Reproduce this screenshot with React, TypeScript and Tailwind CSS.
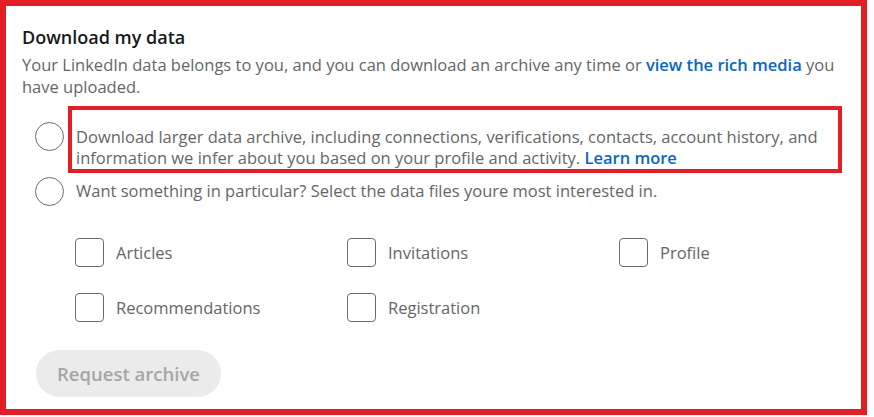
import React from "react";

const files = ["Articles", "Invitations", "Profile", "Recommendations", "Registration"];

function Radio({ className = "" }: { className?: string }) {
  return <span className={`block h-[29px] w-[29px] shrink-0 rounded-full border-[1.5px] border-[#6b6b6b] bg-white ${className}`} />;
}

function Check({ label }: { label: string }) {
  return (
    <label className="flex h-[29px] items-center gap-3">
      <span className="block h-[29px] w-[29px] shrink-0 rounded-[4px] border-[1.5px] border-[#6b6b6b] bg-white" />
      <span>{label}</span>
    </label>
  );
}

export default function App() {
  return (
    <div className="bg-white" style={{ fontFamily: "'Open Sans', 'Noto Sans', sans-serif" }}>
      <section className="h-[415px] w-[867px] border-[6px] border-[#e41e25] px-4 pt-[19px] text-[16.5px] leading-[21.5px] text-[#666666]">
        <h2 className="text-[18px] font-semibold leading-[24px] text-[#191919]">Download my data</h2>
        <p className="mt-[5px]">
          Your LinkedIn data belongs to you, and you can download an archive any time or{" "}
          <a className="font-semibold text-[#0a66c2]">view the rich media</a> you have uploaded.
        </p>

        <div className="ml-[13px] mt-[9px] flex items-start">
          <Radio className="mt-[16px]" />
          <div className="ml-[4px] w-[774px] border-4 border-[#e41e25] pl-[4px] pt-[15.5px]">
            Download larger data archive, including connections, verifications, contacts, account history, and
            information we infer about you based on your profile and activity.{" "}
            <a className="font-semibold text-[#0a66c2]">Learn more</a>
          </div>
        </div>

        <div className="ml-[13px] mt-[4px] flex items-center gap-3">
          <Radio />
          <span>Want something in particular? Select the data files youre most interested in.</span>
        </div>

        <div className="ml-[53px] mt-[32.5px] grid grid-cols-[272px_272px_272px] gap-y-[26px]">
          {files.map((f) => (
            <Check key={f} label={f} />
          ))}
        </div>

        <button
          disabled
          className="ml-[14px] mt-[28px] flex h-[47px] w-[185px] items-center justify-center rounded-full bg-[#ebebeb] text-[18.5px] font-semibold text-[#a6a6a6]"
        >
          Request archive
        </button>
      </section>
    </div>
  );
}
